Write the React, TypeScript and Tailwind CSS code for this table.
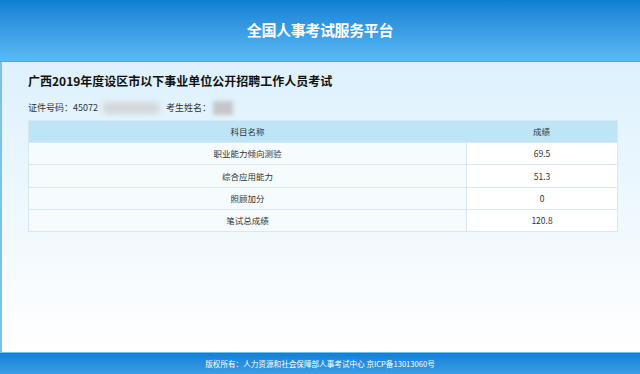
export default function App() {
  const rows = [
    { name: "职业能力倾向测验", score: "69.5" },
    { name: "综合应用能力", score: "51.3" },
    { name: "照顾加分", score: "0" },
    { name: "笔试总成绩", score: "120.8" },
  ];

  return (
    <div
      className="flex h-[374px] w-[640px] flex-col overflow-hidden bg-white"
      style={{ fontFamily: '"Noto Sans CJK SC", "Liberation Sans", sans-serif' }}
    >
      {/* header */}
      <div className="flex h-[62px] shrink-0 items-center justify-center border-b border-[#4aa7e6] bg-gradient-to-b from-[#0a80d3] to-[#5bbaf5]">
        <h1 className="text-[15px] font-bold tracking-tight text-white">全国人事考试服务平台</h1>
      </div>

      {/* content */}
      <div className="flex flex-1 flex-col border-l-2 border-[#7cc1ea] bg-gradient-to-b from-[#ddf1fd] via-[#eef8fe] to-white px-[26px] pt-[9px]">
        <h2 className="text-[12px] leading-[20px] font-bold text-[#111]">
          广西2019年度设区市以下事业单位公开招聘工作人员考试
        </h2>
        <div className="mt-[10px] flex h-[14px] items-center text-[9px] text-[#333]">
          <span>证件号码：45072</span>
          <span className="ml-[4px] h-[12px] w-[58px] rounded-full bg-[#d2d6d9] blur-[3px]" />
          <span className="ml-[6px]">考生姓名：</span>
          <span className="ml-[2px] h-[14px] w-[20px] bg-[#c4c7ca] blur-[2px]" />
        </div>
        <div className="mt-[5px] w-[590px] border border-[#d8e8f2] text-[8.5px] text-[#333]">
          <div className="flex h-[21px] items-center bg-[#bde5f6]">
            <div className="flex-1 text-center">科目名称</div>
            <div className="w-[151px] text-center">成绩</div>
          </div>
          {rows.map((r) => (
            <div key={r.name} className="flex h-[22.3px] items-stretch border-t border-[#d8e8f2] bg-[#f6fbfe]">
              <div className="flex flex-1 items-center justify-center">{r.name}</div>
              <div className="flex w-[151px] items-center justify-center border-l border-[#d8e8f2] bg-white">
                {r.score}
              </div>
            </div>
          ))}
        </div>
      </div>

      {/* footer */}
      <div className="flex h-[22px] shrink-0 items-center justify-center border-t border-[#6fc0ef] bg-gradient-to-b from-[#0f7fd5] to-[#3a9fe6] text-[7.6px] text-white">
        版权所有：人力资源和社会保障部人事考试中心 京ICP备13013060号
      </div>
    </div>
  );
}
